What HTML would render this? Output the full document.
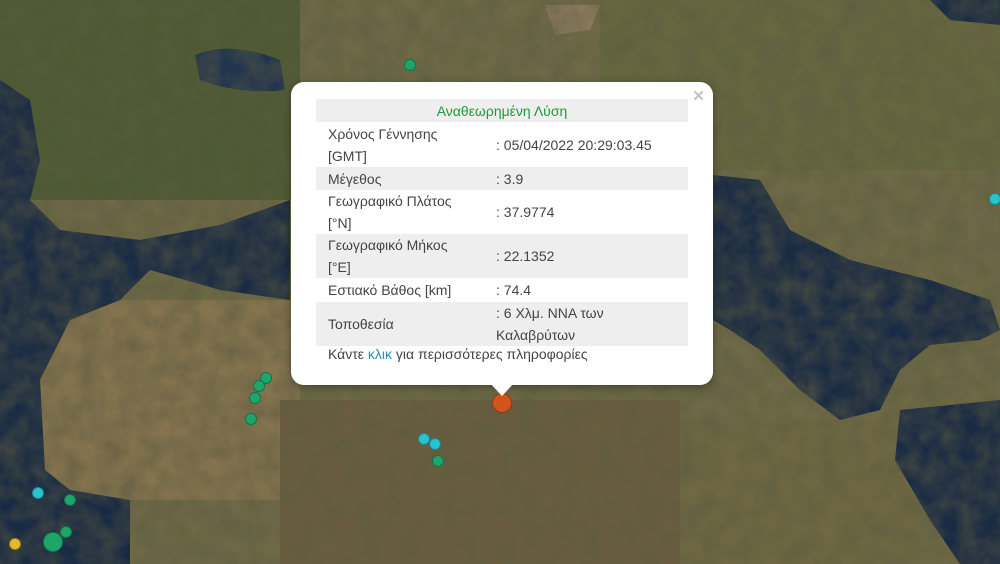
<!DOCTYPE html>
<html><head><meta charset="utf-8"><style>
html,body{margin:0;padding:0;width:1000px;height:564px;overflow:hidden;font-family:"Liberation Sans",Arial,sans-serif}
#map{position:absolute;left:0;top:0}
.pop{position:absolute;left:291px;top:82px;width:422px;height:303px;background:#fff;border-radius:13px;box-shadow:0 2px 8px rgba(0,0,0,.35)}
.tip{position:absolute;left:489px;top:382px;width:0;height:0;border-left:13px solid transparent;border-right:13px solid transparent;border-top:14px solid #fff}
.x{position:absolute;left:693px;top:86px;color:#c3c3c3;font-size:19px;font-weight:bold}
table{position:absolute;left:316px;top:99px;width:372px;border-collapse:collapse;font-size:14px;color:#444}
td{padding:0 0 0 12px;vertical-align:middle;line-height:22px}
tr.g{background:#eee}
.h{text-align:center;color:#1f9a3b;padding:0;height:23px}
.foot{position:absolute;left:328px;top:346px;font-size:14px;color:#444}
.foot span{color:#2a8fc2}
.d{position:absolute;border-radius:50%;border:1px solid rgba(0,0,0,.3)}
</style></head><body>
<svg id="map" width="1000" height="564" viewBox="0 0 1000 564">
<defs>
<filter id="n"><feTurbulence type="fractalNoise" baseFrequency="0.05" numOctaves="3" seed="4"/><feColorMatrix values="0 0 0 0 0.1  0 0 0 0 0.1  0 0 0 0 0.05  0 0 0 -0.9 0.7"/><feComposite in2="SourceGraphic" operator="in"/></filter>
</defs>
<rect width="1000" height="564" fill="#6f6a46"/>
<rect x="0" y="0" width="300" height="200" fill="#4d5a32"/>
<rect x="600" y="0" width="400" height="170" fill="#66683f"/>
<rect x="40" y="300" width="260" height="200" fill="#86744e"/>
<rect x="280" y="400" width="400" height="164" fill="#6a5d3e"/>
<rect x="680" y="420" width="240" height="144" fill="#6f6942"/>
<path d="M0 80 L30 100 L40 160 L30 200 L60 230 L140 240 L220 225 L290 200 L290 300 L220 290 L150 270 L120 300 L70 320 L40 380 L45 470 L70 490 L130 500 L130 564 L0 564 Z" fill="#182a44"/>
<path d="M713 175 L760 180 L790 230 L850 260 L930 280 L990 300 L1000 330 L980 340 L930 345 L900 370 L880 410 L840 420 L800 390 L760 350 L730 330 L713 320 Z" fill="#182a44"/>
<path d="M900 410 L1000 400 L1000 564 L960 564 L930 520 L895 460 Z" fill="#182a44"/>
<path d="M195 55 Q230 40 280 60 L285 90 Q240 95 200 80 Z" fill="#20344f"/>
<path d="M930 0 L1000 0 L1000 25 L950 20 Z" fill="#182a44"/>
<path d="M545 5 L600 5 L590 30 L555 35 Z" fill="#8a7a5a"/>
<rect width="1000" height="564" fill="#000" filter="url(#n)"/>
</svg>
<div class="d" style="left:404px;top:59px;width:10px;height:10px;background:#1ea66a"></div>
<div class="d" style="left:989px;top:193px;width:10px;height:10px;background:#27c4d0"></div>
<div class="d" style="left:260px;top:372px;width:10px;height:10px;background:#1ea66a"></div>
<div class="d" style="left:253px;top:380px;width:10px;height:10px;background:#1ea66a"></div>
<div class="d" style="left:249px;top:392px;width:10px;height:10px;background:#1ea66a"></div>
<div class="d" style="left:245px;top:413px;width:10px;height:10px;background:#1ea66a"></div>
<div class="d" style="left:418px;top:433px;width:10px;height:10px;background:#27c4d0"></div>
<div class="d" style="left:429px;top:438px;width:10px;height:10px;background:#27c4d0"></div>
<div class="d" style="left:432px;top:455px;width:10px;height:10px;background:#1ea66a"></div>
<div class="d" style="left:32px;top:487px;width:10px;height:10px;background:#27c4d0"></div>
<div class="d" style="left:64px;top:494px;width:10px;height:10px;background:#1ea66a"></div>
<div class="d" style="left:60px;top:526px;width:10px;height:10px;background:#1ea66a"></div>
<div class="d" style="left:43px;top:532px;width:18px;height:18px;background:#1ea66a"></div>
<div class="d" style="left:9px;top:538px;width:10px;height:10px;background:#e8b82a"></div>
<div class="d" style="left:492px;top:393px;width:18px;height:18px;background:#d2531c"></div>
<div class="pop"></div><div class="tip"></div>
<div class="x">×</div>
<table>
<tr class="g"><td colspan="2" class="h">Αναθεωρημένη Λύση</td></tr>
<tr style="height:45px"><td style="width:156px">Χρόνος Γέννησης<br>[GMT]</td><td>: 05/04/2022 20:29:03.45</td></tr>
<tr class="g" style="height:23px"><td>Μέγεθος</td><td>: 3.9</td></tr>
<tr style="height:44px"><td>Γεωγραφικό Πλάτος<br>[°N]</td><td>: 37.9774</td></tr>
<tr class="g" style="height:44px"><td>Γεωγραφικό Μήκος<br>[°E]</td><td>: 22.1352</td></tr>
<tr style="height:24px"><td>Εστιακό Βάθος [km]</td><td>: 74.4</td></tr>
<tr class="g" style="height:43px"><td>Τοποθεσία</td><td>: 6 Χλμ. ΝΝΑ των<br>Καλαβρύτων</td></tr>
</table>
<div class="foot">Κάντε <span>κλικ</span> για περισσότερες πληροφορίες</div>
</body></html>
